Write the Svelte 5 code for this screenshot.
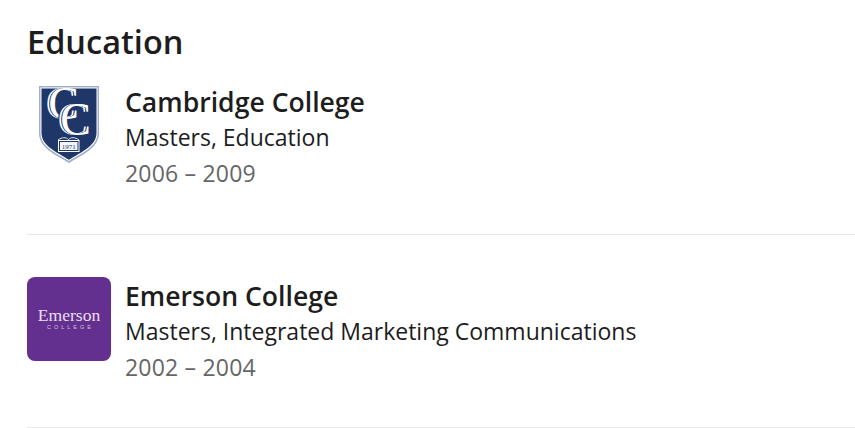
<script>
  const schools = [
    { name: 'Cambridge College', degree: 'Masters, Education', years: '2006 – 2009', logo: 'cc' },
    { name: 'Emerson College', degree: 'Masters, Integrated Marketing Communications', years: '2002 – 2004', logo: 'em' }
  ];
</script>

<main class="page">
  <h2>Education</h2>
  <ul>
    {#each schools as s}
      <li>
        <div class="logo">
          {#if s.logo === 'cc'}
            <svg width="84" height="84" viewBox="0 0 84 84">
              <path d="M12 3H72V50C72 65 55 72 42 80C29 72 12 65 12 50Z" fill="#a3aec8"/>
              <path d="M13.500 4.500H70.500V50C70.500 64 54 70.500 42 78C30 70.500 13.500 64 13.500 50Z" fill="#fff"/>
              <path d="M14.500 5.500H69.500V50C69.500 63 53.500 69.500 42 76.800C30.500 69.500 14.500 63 14.500 50Z" fill="#1f3668"/>
              <defs>
                <text id="cletter" class="cc" font-size="46">C</text>
              </defs>
              <use href="#cletter" x="18.500" y="36" fill="#fff"/>
              <use href="#cletter" x="20.300" y="36" fill="#1f3668"/>
              <use href="#cletter" x="21.300" y="36" fill="#fff"/>
              <use href="#cletter" x="30.500" y="51.500" fill="#1f3668" stroke="#1f3668" stroke-width="2.500"/>
              <use href="#cletter" x="30.500" y="51.500" fill="#fff"/>
              <use href="#cletter" x="32.300" y="51.500" fill="#1f3668"/>
              <use href="#cletter" x="33.300" y="51.500" fill="#fff"/>
              <path d="M31 57C35 54 39 54 41.500 56.500C44 54 48 54 52 57" fill="none" stroke="#dfe4ee" stroke-width="1"/>
              <rect x="31.500" y="57.500" width="20.500" height="11" fill="#1f3668" stroke="#fff" stroke-width="1"/>
              <rect x="33" y="59" width="17.500" height="8" fill="#f3f5f9"/>
              <text x="41.700" y="66" class="yr" font-size="7" fill="#1f3668">1971</text>
            </svg>
          {:else}
            <svg width="84" height="84" viewBox="0 0 84 84">
              <rect width="84" height="84" rx="8" fill="#63308f"/>
              <text x="42" y="43.500" class="em" font-size="17.600" fill="#e9dff3">Emerson</text>
              <text x="43.500" y="52" class="col" font-size="5.500" fill="#d3c1e6">COLLEGE</text>
            </svg>
          {/if}
        </div>
        <div class="text">
          <h3>{s.name}</h3>
          <p class="deg">{s.degree}</p>
          <p class="yrs">{s.years}</p>
        </div>
      </li>
    {/each}
  </ul>
</main>

<style>
  :global(body) { margin: 0; background: #fff; }
  .page {
    width: 855px;
    height: 428px;
    overflow: hidden;
    box-sizing: border-box;
    padding-top: 18px;
    font-family: "Open Sans", "Noto Sans", sans-serif;
    color: #1d1d1d;
  }
  h2 {
    margin: 0 0 -1px 27px;
    font-size: 32.500px;
    line-height: 48px;
    font-weight: 600;
  }
  ul { list-style: none; margin: 0 0 0 27px; padding: 0; }
  li {
    display: flex;
    gap: 14px;
    height: 151px;
    padding-top: 18px;
    border-bottom: 1px solid #e8e8e8;
    margin-bottom: 24px;
  }
  li:last-child { height: 150px; margin-bottom: 0; }
  .logo { width: 84px; height: 84px; flex: none; }
  .logo svg { display: block; }
  .text { padding-top: 2px; }
  h3 { margin: 0; font-size: 26.600px; line-height: 34px; font-weight: 600; }
  p { margin: 0; font-size: 23px; }
  .deg { line-height: 36px; }
  .yrs { line-height: 37px; color: #666; letter-spacing: 0.2px; }
  .cc { font-family: "Liberation Serif", serif; }
  .yr { font-family: "Liberation Serif", serif; text-anchor: middle; }
  .em { font-family: "Liberation Serif", serif; text-anchor: middle; }
  .col { font-family: "Liberation Sans", sans-serif; text-anchor: middle; letter-spacing: 3px; }
</style>
